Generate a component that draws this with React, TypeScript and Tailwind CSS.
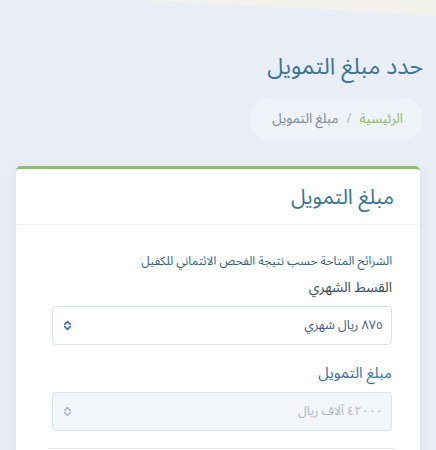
import React from "react";

const arabic = { fontFamily: '"Noto Sans Arabic", "DejaVu Sans", sans-serif' };

function UpDown({ color }: { color: string }) {
  return (
    <svg width="9" height="11" viewBox="0 0 16 20" fill="none" stroke={color} strokeWidth="3" strokeLinecap="round" strokeLinejoin="round">
      <path d="M3 8l5-5 5 5" />
      <path d="M3 12l5 5 5-5" />
    </svg>
  );
}

export default function App() {
  return (
    <div dir="rtl" style={arabic} className="relative min-h-[450px] w-full overflow-hidden bg-[#e9edf6]">
      {/* soft cream swoosh across the top edge */}
      <svg className="absolute left-0 top-0" width="436" height="20" viewBox="0 0 436 20" preserveAspectRatio="none">
        <path d="M120 0 C220 4 340 10 436 16 L436 0 Z" fill="#f3f1ec" />
      </svg>

      <div className="relative px-[13px] pt-[51px]">
        <h1 className="text-[23px] leading-[32px] text-[#3a7597]">حدد مبلغ التمويل</h1>

        <div className="mt-[14px] flex">
          <nav className="flex h-[44px] items-center gap-[8px] rounded-full bg-[#eef2f9] pl-[22px] pr-[20px] text-[13.5px]">
            <span className="text-[#8dbd5d]">الرئيسية</span>
            <span className="text-[#b5bfca]">/</span>
            <span className="text-[#7d8a98]">مبلغ التمويل</span>
          </nav>
        </div>
      </div>

      <div className="ml-[16px] mr-[16px] mt-[25px] rounded-t-[5px] border-t-[3px] border-[#8dbd68] bg-white shadow-[0_2px_10px_rgba(140,150,190,0.18)]">
        <div className="flex h-[56px] items-center border-b border-[#edf0f4] pr-[26px]">
          <h2 className="text-[21px] leading-[28px] text-[#3a7597]">مبلغ التمويل</h2>
        </div>

        <div className="pl-[28px] pr-[28px] pt-[28px]">
          <p className="text-[12px] leading-[18px] text-[#2f5f80]">الشرائح المتاحة حسب نتيجة الفحص الائتماني للكفيل</p>
          <label className="mt-[6px] block text-[14px] leading-[22px] text-[#3d4b59]">القسط الشهري</label>

          <div className="ml-[8px] mt-[7px] flex h-[39px] items-center justify-between rounded-[4px] border border-[#dde2ea] bg-white pl-[10px] pr-[8px]">
            <span className="text-[12.5px] text-[#3a5d8f]">٨٧٥ ريال شهري</span>
            <UpDown color="#3f6db3" />
          </div>

          <label className="mt-[17px] block text-[15px] leading-[22px] text-[#3a7597]">مبلغ التمويل</label>

          <div className="ml-[8px] mt-[8px] flex h-[39px] items-center justify-between rounded-[4px] border border-[#dde2ea] bg-[#f2f5f9] pl-[10px] pr-[8px]">
            <span className="text-[12.5px] text-[#aeb7c1]">٤٢٠٠٠ آلاف ريال</span>
            <UpDown color="#b3bac3" />
          </div>

          <div className="ml-[4px] mr-[-3px] mt-[17px] h-[40px] border-t border-[#e3e7ec]" />
        </div>
      </div>
    </div>
  );
}
